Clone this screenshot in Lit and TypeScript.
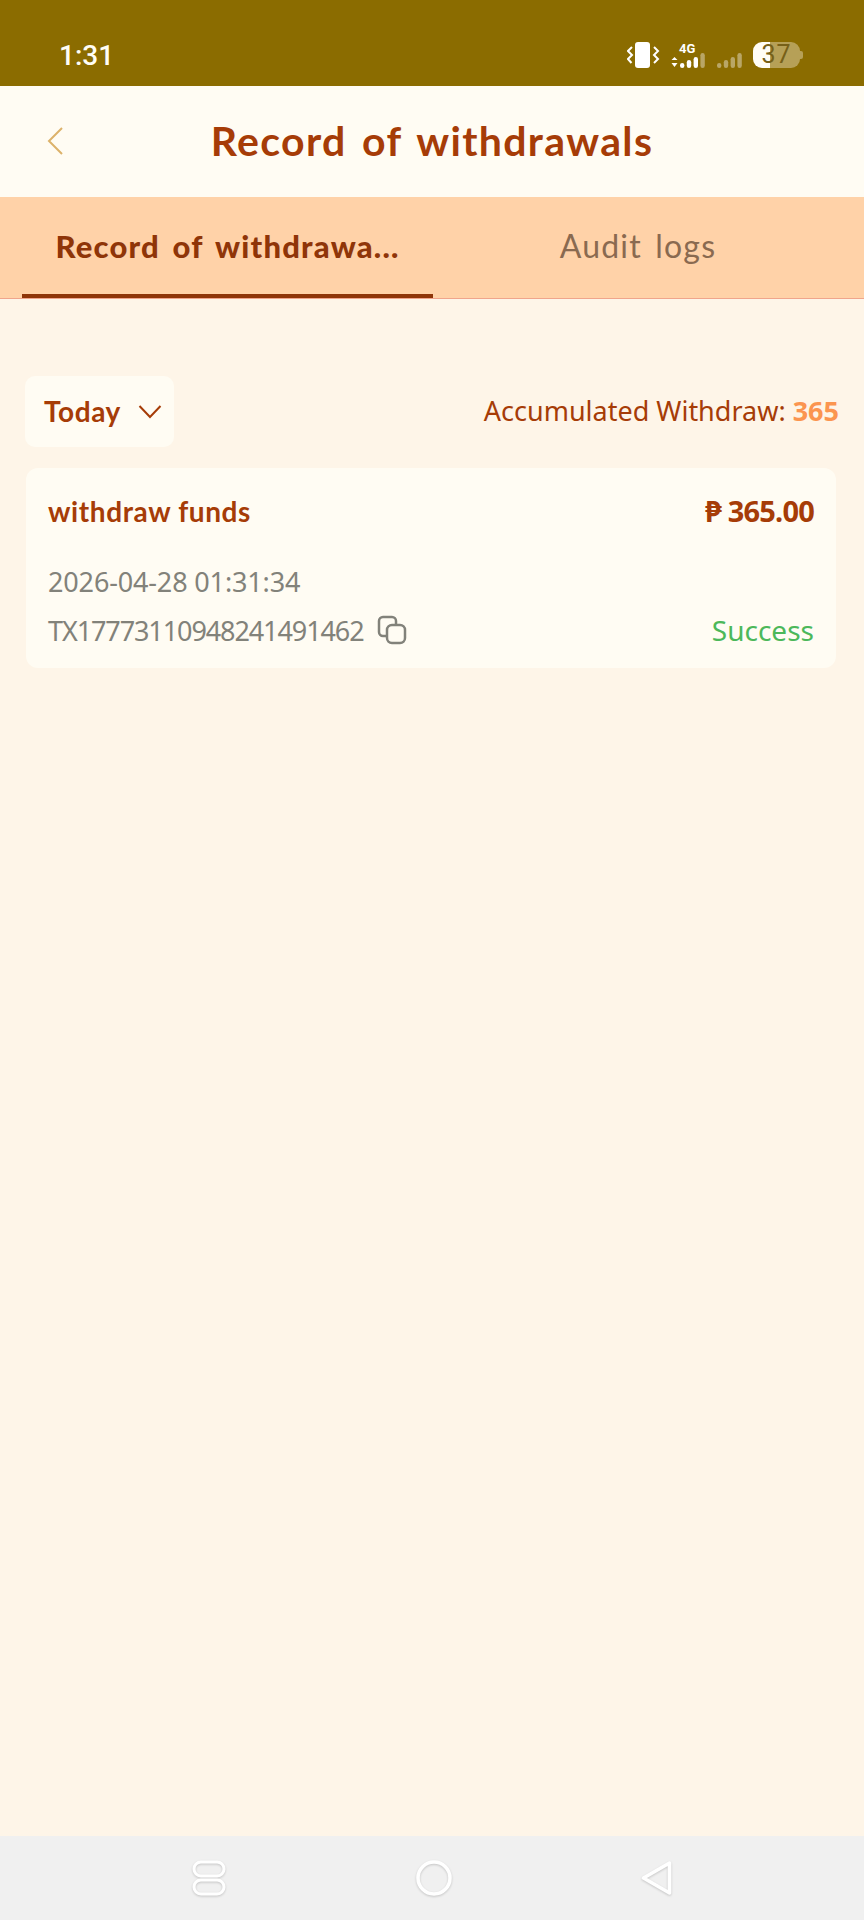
import { LitElement, html, css, svg } from 'lit';
import { customElement } from 'lit/decorators.js';

// signal bars, the last ones faded once they are past "solid"
const signal = (offset: number, levels: number[], solid: number) =>
    levels.map((h, i) => svg`<rect x=${offset + i * 6.8} y=${26 - h} width="4.4" height=${h} rx="2.2" fill="#fff" opacity=${i >= solid ? 0.4 : 1}></rect>`);

@customElement('app-root')
export class AppRoot extends LitElement {

    static styles = css`
        :host {
            display: flex;
            flex-direction: column;
            width: 864px;
            height: 1920px;
            background: #fef5e8;
            font-family: "Lato", "Noto Sans", sans-serif;
        }

        .status {
            height: 86px;
            box-sizing: border-box;
            background: #8b6c00;
            display: flex;
            align-items: center;
            justify-content: space-between;
            padding: 24px 64px 0 59px;
            color: #fffdf5;
        }

        .time {
            font: 500 28px "Roboto", sans-serif;
        }

        .status-icons {
            display: flex;
            align-items: center;
        }

        .status-icons svg {
            display: block;
        }

        .battery {
            position: relative;
            width: 47px;
            height: 26px;
            margin-left: 11px;
            border-radius: 9px;
            background: linear-gradient(90deg, #fffdf5 36%, #b6a057 36%);
            color: #776018;
            font: 400 25px/26px "Roboto", sans-serif;
            text-align: center;
            letter-spacing: 1px;
        }

        .battery::after {
            content: "";
            position: absolute;
            right: -3px;
            top: 9px;
            width: 3px;
            height: 8px;
            border-radius: 0 2px 2px 0;
            background: #b6a057;
        }

        .header {
            height: 111px;
            box-sizing: border-box;
            padding-bottom: 3px;
            background: #fffcf3;
            display: flex;
            align-items: center;
            justify-content: center;
            position: relative;
        }

        .back {
            position: absolute;
            left: 45px;
            top: 39px;
        }

        .title {
            color: #a63c07;
            font-size: 41px;
            font-weight: 700;
            letter-spacing: 1.35px;
            word-spacing: 4px;
        }

        .tabs {
            height: 102px;
            box-sizing: border-box;
            background: #ffd2a8;
            border-bottom: 1px solid #f0a58c;
            display: grid;
            grid-template-columns: 411px 1fr;
            padding: 0 21px 0 22px;
        }

        .tab {
            display: flex;
            align-items: center;
            justify-content: center;
            padding-bottom: 4px;
            font-size: 32px;
            color: #8a6a50;
            word-spacing: 4px;
            letter-spacing: 1.2px;
        }

        .tab.active {
            color: #8f3508;
            font-size: 31px;
            font-weight: 900;
            letter-spacing: 1.2px;
            border-bottom: 4px solid #8f3508;
            box-sizing: border-box;
            padding-bottom: 0;
        }

        .content {
            flex: 1;
            padding: 77px 25px 0;
            display: flex;
            flex-direction: column;
            gap: 21px;
        }

        .filters {
            display: flex;
            align-items: center;
            justify-content: space-between;
        }

        .today {
            width: 149px;
            height: 71px;
            box-sizing: border-box;
            display: flex;
            align-items: center;
            gap: 17px;
            padding: 0 0 1px 19px;
            border-radius: 10px;
            background: #fffcf3;
            color: #a63c07;
            font-size: 28px;
            font-weight: 700;
            letter-spacing: 0.6px;
        }

        .total {
            padding-bottom: 3px;
            color: #a63c07;
            font: 400 27px "Noto Sans", sans-serif;
        }

        .total b {
            color: #fb9550;
            font-weight: 700;
        }

        .card {
            height: 200px;
            margin: 0 3px 0 1px;
            box-sizing: border-box;
            padding: 23px 22px 0;
            border-radius: 12px;
            background: #fffcf3;
            font: 400 27px "Noto Sans", sans-serif;
            color: #82827a;
        }

        .row {
            display: flex;
            align-items: center;
            justify-content: space-between;
        }

        .name {
            color: #a63c07;
            font: 700 28px "Lato", sans-serif;
            letter-spacing: 0.6px;
        }

        .amount {
            color: #a63c07;
            font-size: 29px;
            font-weight: 700;
            letter-spacing: -0.8px;
        }

        .date {
            margin-top: 34px;
            line-height: 36px;
            letter-spacing: -0.15px;
        }

        .tx {
            display: flex;
            align-items: center;
            gap: 13px;
            letter-spacing: -1.1px;
        }

        .row.bottom {
            margin-top: 11px;
        }

        .success {
            color: #4cb85a;
            font-size: 28px;
        }

        .nav {
            height: 84px;
            background: #f0f0f0;
            display: grid;
            grid-template-columns: 224px 225px 1fr;
            align-items: center;
            padding-left: 192px;
            box-sizing: border-box;
        }

        .nav svg {
            display: block;
            filter: drop-shadow(0 1px 1px rgba(0, 0, 0, 0.18));
        }
    `;

    render() {
        return html`
            <div class="status">
                <span class="time">1:31</span>
                <div class="status-icons">
                    <svg width="33" height="26" viewBox="0 0 33 26" fill="none">
                        <rect x="8" y="0" width="15" height="26" rx="3" fill="#fff"></rect>
                        <path d="M5 5 L1 9 L5 13 L1 17 L4.5 21 M27 5 L31 9 L27 13 L31 17 L27 21" stroke="#fff" stroke-width="2"></path>
                    </svg>
                    <svg width="36" height="26" viewBox="0 0 36 26" style="margin-left: 11px">
                        <text x="8" y="11" font-family="Roboto" font-weight="700" font-size="13" fill="#fff">4G</text>
                        <path d="M0.5 18 L3.5 15 L6.5 18 Z M0.5 21 L6.5 21 L3.5 25 Z" fill="#fff"></path>
                        ${signal(9, [5, 8, 11, 15], 3)}
                    </svg>
                    <svg width="25" height="26" viewBox="0 0 25 26" style="margin-left: 10px">
                        ${signal(0, [5, 8, 11, 15], 0)}
                    </svg>
                    <div class="battery">37</div>
                </div>
            </div>
            <div class="header">
                <svg class="back" width="22" height="32" viewBox="0 0 22 32" fill="none">
                    <path d="M17 3 L4 16 L17 29" stroke="#dcb26a" stroke-width="2"></path>
                </svg>
                <div class="title">Record of withdrawals</div>
            </div>
            <div class="tabs">
                <div class="tab active">Record of withdrawa...</div>
                <div class="tab">Audit logs</div>
            </div>
            <div class="content">
                <div class="filters">
                    <div class="today">
                        Today
                        <svg width="24" height="15" viewBox="0 0 24 15" fill="none">
                            <path d="M1.5 2 L12 13 L22.5 2" stroke="#a63c07" stroke-width="2"></path>
                        </svg>
                    </div>
                    <div class="total">Accumulated Withdraw: <b>365</b></div>
                </div>
                <div class="card">
                    <div class="row">
                        <span class="name">withdraw funds</span>
                        <span class="amount">₱ 365.00</span>
                    </div>
                    <div class="date">2026-04-28 01:31:34</div>
                    <div class="row bottom">
                        <div class="tx">
                            TX17773110948241491462
                            <svg width="30" height="30" viewBox="0 0 30 30" fill="none" stroke="#82827a" stroke-width="2.5">
                                <path d="M10 21 H6 a4 4 0 0 1 -4 -4 V6 a4 4 0 0 1 4 -4 H15 a4 4 0 0 1 4 4 V9"></path>
                                <rect x="10" y="10" width="18" height="18" rx="5"></rect>
                            </svg>
                        </div>
                        <span class="success">Success</span>
                    </div>
                </div>
            </div>
            <div class="nav">
                <svg width="34" height="36" viewBox="0 0 34 36" fill="none" stroke="#fff" stroke-width="3">
                    <rect x="2" y="2" width="30" height="14" rx="7"></rect>
                    <rect x="2" y="20" width="30" height="14" rx="7"></rect>
                </svg>
                <svg width="36" height="36" viewBox="0 0 36 36" fill="none" stroke="#fff" stroke-width="3.5">
                    <circle cx="18" cy="18" r="16"></circle>
                </svg>
                <svg width="31" height="36" viewBox="0 0 31 36" fill="none" stroke="#fff" stroke-width="3.5" stroke-linejoin="round">
                    <path d="M28.5 3 V33 L2.5 18 Z"></path>
                </svg>
            </div>
        `;
    }
}
